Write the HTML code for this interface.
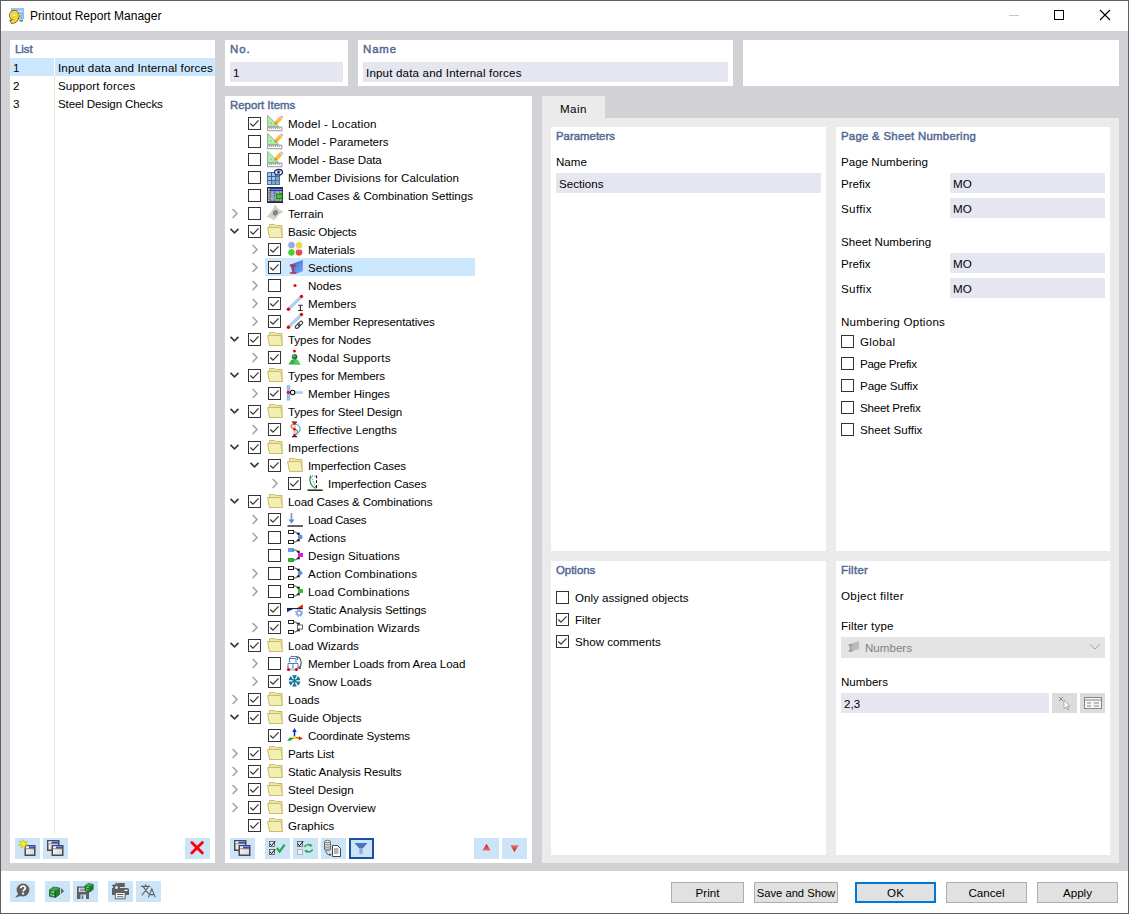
<!DOCTYPE html><html><head><meta charset="utf-8"><title>Printout Report Manager</title><style>
*{margin:0;padding:0;box-sizing:border-box}
html,body{width:1129px;height:914px;overflow:hidden;background:#fff}
body{position:relative;font-family:"Liberation Sans",sans-serif;font-size:11.6px;color:#000}
.a{position:absolute;display:block}
svg{overflow:visible}
.pn{position:absolute;background:#fff}
.h{position:absolute;font-weight:normal;font-size:11.4px;color:#516894;-webkit-text-stroke:.45px #516894;white-space:nowrap;line-height:14px}
.t{position:absolute;white-space:nowrap;line-height:18px}
.inp{position:absolute;background:#e6e6f0}
.tb{position:absolute;background:#cce4f7;width:25px;height:21px}
.btn{position:absolute;top:882px;height:21px;background:#e1e1e1;border:1px solid #adadad;text-align:center;line-height:19px}
</style></head><body>
<div class="a" style="left:0;top:0;width:1129px;height:914px;border:1px solid #5f5f5f;background:#fff"></div>
<div class="a" style="left:1px;top:31px;width:1127px;height:840px;background:#d1d1d6"></div>
<svg class="a" style="left:8px;top:6px" width="18" height="18" viewBox="0 0 18 18"><rect x="3" y="2" width="13" height="11.2" fill="#8fbce8"/><path d="M3 3h13" stroke="#a8ccf0"/><path d="M9 5.3h5.5M10.5 8.5h2" stroke="#fff" stroke-width="1"/><path d="M1.5 14.6h3M11.5 14.6h3.5" stroke="#2a9a4a" stroke-width="1.6"/><g fill="none" stroke-linecap="round"><circle cx="6.2" cy="9.3" r="2.9" stroke="#3a3a3a" stroke-width="4.4"/><path d="M9.1 9.8C9 13 7.4 15 4.6 15.7" stroke="#3a3a3a" stroke-width="4.4"/><circle cx="6.2" cy="9.3" r="2.9" stroke="#f8d428" stroke-width="3.3"/><path d="M9.1 9.8C9 13 7.4 15 4.6 15.7" stroke="#f8d428" stroke-width="3.3"/></g><circle cx="6.3" cy="9.3" r="1.2" fill="#fff"/></svg>
<div class="t" style="left:30px;top:7px;font-size:12px;line-height:18px">Printout Report Manager</div>
<div class="a" style="left:1009px;top:15px;width:10px;height:1px;background:#c8c8c8"></div>
<div class="a" style="left:1054px;top:10px;width:10px;height:10px;border:1px solid #000"></div>
<svg class="a" style="left:1099px;top:9px" width="12" height="12"><path d="M1 1l10 10M11 1l-10 10" stroke="#000" stroke-width="1.1"/></svg>
<div class="pn" style="left:10px;top:40px;width:205px;height:823px"></div>
<div class="h" style="left:15px;top:42px">List</div>
<div class="a" style="left:10px;top:58px;width:205px;height:18px;background:#cce8ff"></div>
<div class="a" style="left:54px;top:76px;width:1px;height:758px;background:#e3e3e3"></div>
<div class="a" style="left:54px;top:58px;width:1px;height:18px;background:#fff"></div>
<div class="t" style="left:13px;top:59px;">1</div>
<div class="t" style="left:58px;top:59px;letter-spacing:.14px">Input data and Internal forces</div>
<div class="t" style="left:13px;top:77px;">2</div>
<div class="t" style="left:58px;top:77px;letter-spacing:.14px">Support forces</div>
<div class="t" style="left:13px;top:95px;">3</div>
<div class="t" style="left:58px;top:95px;letter-spacing:-.15px">Steel Design Checks</div>
<div class="tb" style="left:15px;top:838px"></div><div class="tb" style="left:43px;top:838px"></div><div class="tb" style="left:185px;top:838px"></div>
<svg class="a" style="left:15px;top:838px" width="25" height="21"><defs><linearGradient id="wg" x1="0" y1="0" x2="1" y2="1"><stop offset="0" stop-color="#fff"/><stop offset="1" stop-color="#d4d4d4"/></linearGradient></defs><rect x="10.25" y="7.75" width="9.5" height="9.5" fill="url(#wg)" stroke="#4a4a4a" stroke-width="1.5"/><rect x="11.0" y="8.5" width="8" height="2" fill="#f4f4f4"/><rect x="14.0" y="8.5" width="5" height="2" fill="#3848f0"/><path d="M11.0 10.75h8" stroke="#4a4a4a" stroke-width=".6"/><path d="M8.4 1.6l1.1 2.6 2.8-.9-1.7 2.3 2.4 1.6-2.9.3.2 2.9-2-2.1-2 2.1.2-2.9-2.9-.3 2.4-1.6-1.7-2.3 2.8.9z" fill="#f8f010" stroke="#a8a040" stroke-width=".5"/></svg>
<svg class="a" style="left:43px;top:838px" width="25" height="21"><defs><linearGradient id="wg" x1="0" y1="0" x2="1" y2="1"><stop offset="0" stop-color="#fff"/><stop offset="1" stop-color="#d4d4d4"/></linearGradient></defs><rect x="4.75" y="2.75" width="11.0" height="9.5" fill="url(#wg)" stroke="#4a4a4a" stroke-width="1.5"/><rect x="5.5" y="3.5" width="9.5" height="2" fill="#f4f4f4"/><rect x="8.5" y="3.5" width="6.5" height="2" fill="#3848f0"/><path d="M5.5 5.75h9.5" stroke="#4a4a4a" stroke-width=".6"/><rect x="9.25" y="7.75" width="10.5" height="9.5" fill="url(#wg)" stroke="#4a4a4a" stroke-width="1.5"/><rect x="10.0" y="8.5" width="9" height="2" fill="#f4f4f4"/><rect x="13.0" y="8.5" width="6" height="2" fill="#3848f0"/><path d="M10.0 10.75h9" stroke="#4a4a4a" stroke-width=".6"/></svg>
<svg class="a" style="left:189px;top:840px" width="17" height="17"><path d="M2.8 2.5l10.6 10.6M13.4 2.5L2.8 13.1" stroke="#f00" stroke-width="2.8" stroke-linecap="round"/></svg>
<div class="pn" style="left:225px;top:40px;width:123px;height:46px"></div>
<div class="h" style="left:230px;top:42px;letter-spacing:1px">No.</div>
<div class="inp" style="left:230px;top:62px;width:113px;height:20px"></div>
<div class="t" style="left:233px;top:64px;">1</div>
<div class="pn" style="left:358px;top:40px;width:375px;height:46px"></div>
<div class="h" style="left:363px;top:42px;letter-spacing:.9px">Name</div>
<div class="inp" style="left:363px;top:62px;width:365px;height:20px"></div>
<div class="t" style="left:366px;top:64px;letter-spacing:.16px">Input data and Internal forces</div>
<div class="pn" style="left:743px;top:40px;width:376px;height:46px"></div>
<div class="pn" style="left:225px;top:96px;width:307px;height:767px"></div>
<div class="h" style="left:230px;top:98px">Report Items</div>
<div class="a" style="left:265px;top:258px;width:210px;height:18px;background:#cce8ff"></div>
<svg class="a" style="left:248px;top:117px" width="13" height="13"><rect x=".5" y=".5" width="12" height="12" fill="#fff" stroke="#333"/><path d="M2.3 6.5 L5 9.1 L10.6 3.4" fill="none" stroke="#383838" stroke-width="1.2"/></svg>
<svg class="a" style="left:267px;top:115px" width="16" height="16" viewBox="0 0 16 16"><path d="M.6 .4v11h11.2z" fill="#a6f6a0" stroke="#8a9a8a" stroke-width=".8"/><path d="M3.2 6.4v2.6h2.6z" fill="#c0a8d8"/><rect x=".6" y="12.2" width="14.2" height="3.5" fill="#fff" stroke="#a0a0a0" stroke-width="1.1"/><path d="M2.6 12.5v1.5M4.6 12.5v1.5M6.6 12.5v1.5M8.6 12.5v1.5M10.6 12.5v1.5M12.6 12.5v1.5" stroke="#999" stroke-width=".9"/><path d="M10.17 8.95L7.99 6.89 12.73 1.85 14.91 3.91z" fill="#fcc020" stroke="#c89010" stroke-width=".4"/><path d="M7.5 9.6L7.99 6.89 10.17 8.95z" fill="#e06020"/><path d="M12.73 1.85L14.91 3.91 16.49 2.23 14.31 .17z" fill="#e8a8e0"/><path d="M12.9 2.1l2 1.9" stroke="#fff4d0" stroke-width=".7"/></svg>
<div class="t" style="left:288px;top:115px;letter-spacing:0.187px">Model - Location</div>
<svg class="a" style="left:248px;top:135px" width="13" height="13"><rect x=".5" y=".5" width="12" height="12" fill="#fff" stroke="#333"/></svg>
<svg class="a" style="left:267px;top:133px" width="16" height="16" viewBox="0 0 16 16"><path d="M.6 .4v11h11.2z" fill="#a6f6a0" stroke="#8a9a8a" stroke-width=".8"/><path d="M3.2 6.4v2.6h2.6z" fill="#c0a8d8"/><rect x=".6" y="12.2" width="14.2" height="3.5" fill="#fff" stroke="#a0a0a0" stroke-width="1.1"/><path d="M2.6 12.5v1.5M4.6 12.5v1.5M6.6 12.5v1.5M8.6 12.5v1.5M10.6 12.5v1.5M12.6 12.5v1.5" stroke="#999" stroke-width=".9"/><path d="M10.17 8.95L7.99 6.89 12.73 1.85 14.91 3.91z" fill="#fcc020" stroke="#c89010" stroke-width=".4"/><path d="M7.5 9.6L7.99 6.89 10.17 8.95z" fill="#e06020"/><path d="M12.73 1.85L14.91 3.91 16.49 2.23 14.31 .17z" fill="#e8a8e0"/><path d="M12.9 2.1l2 1.9" stroke="#fff4d0" stroke-width=".7"/></svg>
<div class="t" style="left:288px;top:133px;letter-spacing:-0.076px">Model - Parameters</div>
<svg class="a" style="left:248px;top:153px" width="13" height="13"><rect x=".5" y=".5" width="12" height="12" fill="#fff" stroke="#333"/></svg>
<svg class="a" style="left:267px;top:151px" width="16" height="16" viewBox="0 0 16 16"><path d="M.6 .4v11h11.2z" fill="#a6f6a0" stroke="#8a9a8a" stroke-width=".8"/><path d="M3.2 6.4v2.6h2.6z" fill="#c0a8d8"/><rect x=".6" y="12.2" width="14.2" height="3.5" fill="#fff" stroke="#a0a0a0" stroke-width="1.1"/><path d="M2.6 12.5v1.5M4.6 12.5v1.5M6.6 12.5v1.5M8.6 12.5v1.5M10.6 12.5v1.5M12.6 12.5v1.5" stroke="#999" stroke-width=".9"/><path d="M10.17 8.95L7.99 6.89 12.73 1.85 14.91 3.91z" fill="#fcc020" stroke="#c89010" stroke-width=".4"/><path d="M7.5 9.6L7.99 6.89 10.17 8.95z" fill="#e06020"/><path d="M12.73 1.85L14.91 3.91 16.49 2.23 14.31 .17z" fill="#e8a8e0"/><path d="M12.9 2.1l2 1.9" stroke="#fff4d0" stroke-width=".7"/></svg>
<div class="t" style="left:288px;top:151px;letter-spacing:-0.144px">Model - Base Data</div>
<svg class="a" style="left:248px;top:171px" width="13" height="13"><rect x=".5" y=".5" width="12" height="12" fill="#fff" stroke="#333"/></svg>
<svg class="a" style="left:267px;top:169px" width="16" height="16" viewBox="0 0 16 16"><rect x=".5" y="3.5" width="12" height="12" fill="#9cc8ee" stroke="#50709a"/><path d="M4.5 3.5v12M8.5 3.5v12M.5 7.5h12M.5 11.5h12" stroke="#405e88" stroke-width="1"/><path d="M8.5 7.5h4v8h-4zM4.5 11.5h4v4h-4z" fill="#6a8ab8" opacity=".6"/><ellipse cx="11.5" cy="3.2" rx="4" ry="2.7" fill="#fff" stroke="#262466" stroke-width="1.3"/><circle cx="11.5" cy="3.2" r="1.7" fill="#4a7ad8"/><circle cx="11.5" cy="3.2" r=".8" fill="#000"/></svg>
<div class="t" style="left:288px;top:169px;letter-spacing:0.048px">Member Divisions for Calculation</div>
<svg class="a" style="left:248px;top:189px" width="13" height="13"><rect x=".5" y=".5" width="12" height="12" fill="#fff" stroke="#333"/></svg>
<svg class="a" style="left:267px;top:187px" width="16" height="16" viewBox="0 0 16 16"><rect x=".5" y=".5" width="15" height="15" fill="#777" stroke="#2a2a2a"/><rect x="3" y="1" width="12.5" height="2.8" fill="#1a2aa8"/><path d="M3.5 2.4h11.5" stroke="#6a9af0" stroke-width="1"/><path d="M1.8 2v12.5" stroke="#fff" stroke-width="1.1" stroke-dasharray="1 1.2"/><path d="M8.5 5h7M8.5 13h7M8.5 7v5M11 5.5v1.5" stroke="#f4f4f4" stroke-width="1" stroke-dasharray="1.2 1"/><path d="M4.2 4v6.8H2.4l3 3.6 3-3.6H6.6V4z" fill="#88b0e0"/><rect x="9.2" y="7.2" width="6" height="4.2" fill="#30d030" stroke="#0a7a0a" stroke-width=".8"/><path d="M1 15h14" stroke="#222" stroke-width="1.2"/></svg>
<div class="t" style="left:288px;top:187px;letter-spacing:-0.041px">Load Cases &amp; Combination Settings</div>
<svg class="a" style="left:231px;top:208px" width="8" height="11"><path d="M1.6 1l4.4 4.5-4.4 4.5" fill="none" stroke="#a4a4a4" stroke-width="1.6"/></svg>
<svg class="a" style="left:248px;top:207px" width="13" height="13"><rect x=".5" y=".5" width="12" height="12" fill="#fff" stroke="#333"/></svg>
<svg class="a" style="left:267px;top:205px" width="16" height="16" viewBox="0 0 16 16"><path d="M8.4 0C9.2 3 11.5 5.2 15.9 6.6 12.8 8.6 9.8 11 6.8 15 5.2 13.2 2.8 12.2 0 11.7 3.2 9 5.8 5.5 8.4 0z" fill="#d6d6c0" stroke="#c2c2aa" stroke-width=".6"/><path d="M3 10.5c3-1 7-2 11-3.5M5 6c2 2 3 5 4 7.5" fill="none" stroke="#bcbca2" stroke-width=".6"/><ellipse cx="8.4" cy="7.8" rx="2.4" ry="2.9" transform="rotate(30 8.4 7.8)" fill="#80809a"/></svg>
<div class="t" style="left:288px;top:205px;">Terrain</div>
<svg class="a" style="left:229px;top:227px" width="11" height="8"><path d="M1.5 1.8l4 4 4-4" fill="none" stroke="#3c3c3c" stroke-width="1.75"/></svg>
<svg class="a" style="left:248px;top:225px" width="13" height="13"><rect x=".5" y=".5" width="12" height="12" fill="#fff" stroke="#333"/><path d="M2.3 6.5 L5 9.1 L10.6 3.4" fill="none" stroke="#383838" stroke-width="1.2"/></svg>
<svg class="a" style="left:267px;top:223px" width="16" height="16" viewBox="0 0 16 16"><path d="M2.5 1.5h5.2l1 1h6.3v12h-12.5z" fill="#f2e8a6" stroke="#c9bd6c"/><path d="M.6 4.5h13.4l1.5 10h-13z" fill="#f5eeb2" stroke="#c9bd6c"/></svg>
<div class="t" style="left:288px;top:223px;letter-spacing:-0.200px">Basic Objects</div>
<svg class="a" style="left:251px;top:244px" width="8" height="11"><path d="M1.6 1l4.4 4.5-4.4 4.5" fill="none" stroke="#a4a4a4" stroke-width="1.6"/></svg>
<svg class="a" style="left:268px;top:243px" width="13" height="13"><rect x=".5" y=".5" width="12" height="12" fill="#fff" stroke="#333"/><path d="M2.3 6.5 L5 9.1 L10.6 3.4" fill="none" stroke="#383838" stroke-width="1.2"/></svg>
<svg class="a" style="left:287px;top:241px" width="16" height="16" viewBox="0 0 16 16"><defs><clipPath id="mclip"><rect x="0" y="7.8" width="16" height="9"/></clipPath></defs><g stroke="#fff" stroke-width="1"><circle cx="12" cy="4.4" r="3.9" fill="#e6dc50"/><circle cx="4.5" cy="4.2" r="3.9" fill="#98a6e4"/><circle cx="4.5" cy="11.4" r="3.9" fill="#50d030"/><circle cx="12" cy="11.4" r="3.9" fill="#e84848"/><circle cx="12" cy="4.4" r="3.9" fill="#e6dc50" clip-path="url(#mclip)"/></g></svg>
<div class="t" style="left:308px;top:241px;">Materials</div>
<svg class="a" style="left:251px;top:262px" width="8" height="11"><path d="M1.6 1l4.4 4.5-4.4 4.5" fill="none" stroke="#a4a4a4" stroke-width="1.6"/></svg>
<svg class="a" style="left:268px;top:261px" width="13" height="13"><rect x=".5" y=".5" width="12" height="12" fill="#fff" stroke="#333"/><path d="M2.3 6.5 L5 9.1 L10.6 3.4" fill="none" stroke="#383838" stroke-width="1.2"/></svg>
<svg class="a" style="left:287px;top:259px" width="16" height="16" viewBox="0 0 16 16"><defs><linearGradient id="sg" x1="0" y1="0" x2="1" y2="1"><stop offset="0" stop-color="#2a60d0"/><stop offset="1" stop-color="#70a8f0"/></linearGradient></defs><path d="M3 5.8L15.8 1v11.2L9 14.8H6z" fill="url(#sg)"/><path d="M10 5v9M13 3.5v9.5" stroke="#9ac4f4" stroke-width=".5" opacity=".6"/><path d="M2.8 6.4h6.6M6.1 6.4v7.6M2.8 14h6.6" stroke="#c02c48" stroke-width="1.6"/></svg>
<div class="t" style="left:308px;top:259px;">Sections</div>
<svg class="a" style="left:251px;top:280px" width="8" height="11"><path d="M1.6 1l4.4 4.5-4.4 4.5" fill="none" stroke="#a4a4a4" stroke-width="1.6"/></svg>
<svg class="a" style="left:268px;top:279px" width="13" height="13"><rect x=".5" y=".5" width="12" height="12" fill="#fff" stroke="#333"/></svg>
<svg class="a" style="left:287px;top:277px" width="16" height="16" viewBox="0 0 16 16"><circle cx="8" cy="8.5" r="1.6" fill="#e01010"/></svg>
<div class="t" style="left:308px;top:277px;">Nodes</div>
<svg class="a" style="left:251px;top:298px" width="8" height="11"><path d="M1.6 1l4.4 4.5-4.4 4.5" fill="none" stroke="#a4a4a4" stroke-width="1.6"/></svg>
<svg class="a" style="left:268px;top:297px" width="13" height="13"><rect x=".5" y=".5" width="12" height="12" fill="#fff" stroke="#333"/><path d="M2.3 6.5 L5 9.1 L10.6 3.4" fill="none" stroke="#383838" stroke-width="1.2"/></svg>
<svg class="a" style="left:287px;top:295px" width="16" height="16" viewBox="0 0 16 16"><path d="M1.4 14.3L14.5 1.4" stroke="#8fb2e2" stroke-width="2.8"/><path d="M1.4 14.3L14.5 1.4" stroke="#c4e0f8" stroke-width="1.2"/><circle cx="1.4" cy="14.3" r="1.7" fill="#e00"/><circle cx="14.5" cy="1.4" r="1.7" fill="#e00"/><path d="M11 10.2h4.8M13.4 10.2v5.3M11 15.5h4.8" stroke="#333" stroke-width="1.1"/></svg>
<div class="t" style="left:308px;top:295px;">Members</div>
<svg class="a" style="left:251px;top:316px" width="8" height="11"><path d="M1.6 1l4.4 4.5-4.4 4.5" fill="none" stroke="#a4a4a4" stroke-width="1.6"/></svg>
<svg class="a" style="left:268px;top:315px" width="13" height="13"><rect x=".5" y=".5" width="12" height="12" fill="#fff" stroke="#333"/><path d="M2.3 6.5 L5 9.1 L10.6 3.4" fill="none" stroke="#383838" stroke-width="1.2"/></svg>
<svg class="a" style="left:287px;top:313px" width="16" height="16" viewBox="0 0 16 16"><path d="M1.4 14.3L14.5 1.4" stroke="#8fb2e2" stroke-width="2.8"/><path d="M1.4 14.3L14.5 1.4" stroke="#c4e0f8" stroke-width="1.2"/><circle cx="1.4" cy="14.3" r="1.7" fill="#e00"/><circle cx="14.5" cy="1.4" r="1.7" fill="#e00"/><g fill="none" stroke="#3a3a3a" stroke-width="1.1"><rect x="8" y="11.6" width="5.4" height="3" rx="1.5" transform="rotate(-40 10.7 13.1)"/><rect x="10.6" y="9" width="5.4" height="3" rx="1.5" transform="rotate(-40 13.3 10.5)"/></g></svg>
<div class="t" style="left:308px;top:313px;letter-spacing:-0.124px">Member Representatives</div>
<svg class="a" style="left:229px;top:335px" width="11" height="8"><path d="M1.5 1.8l4 4 4-4" fill="none" stroke="#3c3c3c" stroke-width="1.75"/></svg>
<svg class="a" style="left:248px;top:333px" width="13" height="13"><rect x=".5" y=".5" width="12" height="12" fill="#fff" stroke="#333"/><path d="M2.3 6.5 L5 9.1 L10.6 3.4" fill="none" stroke="#383838" stroke-width="1.2"/></svg>
<svg class="a" style="left:267px;top:331px" width="16" height="16" viewBox="0 0 16 16"><path d="M2.5 1.5h5.2l1 1h6.3v12h-12.5z" fill="#f2e8a6" stroke="#c9bd6c"/><path d="M.6 4.5h13.4l1.5 10h-13z" fill="#f5eeb2" stroke="#c9bd6c"/></svg>
<div class="t" style="left:288px;top:331px;letter-spacing:-0.093px">Types for Nodes</div>
<svg class="a" style="left:251px;top:352px" width="8" height="11"><path d="M1.6 1l4.4 4.5-4.4 4.5" fill="none" stroke="#a4a4a4" stroke-width="1.6"/></svg>
<svg class="a" style="left:268px;top:351px" width="13" height="13"><rect x=".5" y=".5" width="12" height="12" fill="#fff" stroke="#333"/><path d="M2.3 6.5 L5 9.1 L10.6 3.4" fill="none" stroke="#383838" stroke-width="1.2"/></svg>
<svg class="a" style="left:287px;top:349px" width="16" height="16" viewBox="0 0 16 16"><defs><radialGradient id="nsg" cx=".35" cy=".35" r=".7"><stop offset="0" stop-color="#60c070"/><stop offset="1" stop-color="#0a4a1a"/></radialGradient></defs><path d="M4.5 10.8h6l3 4.6H1.3z" fill="#38b048"/><path d="M7.5 10.8h3l3 4.6h-6z" fill="#50cc60"/><circle cx="7.5" cy="7.7" r="2.8" fill="url(#nsg)"/><circle cx="7.4" cy="2.2" r="1.4" fill="#e00"/></svg>
<div class="t" style="left:308px;top:349px;letter-spacing:0.200px">Nodal Supports</div>
<svg class="a" style="left:229px;top:371px" width="11" height="8"><path d="M1.5 1.8l4 4 4-4" fill="none" stroke="#3c3c3c" stroke-width="1.75"/></svg>
<svg class="a" style="left:248px;top:369px" width="13" height="13"><rect x=".5" y=".5" width="12" height="12" fill="#fff" stroke="#333"/><path d="M2.3 6.5 L5 9.1 L10.6 3.4" fill="none" stroke="#383838" stroke-width="1.2"/></svg>
<svg class="a" style="left:267px;top:367px" width="16" height="16" viewBox="0 0 16 16"><path d="M2.5 1.5h5.2l1 1h6.3v12h-12.5z" fill="#f2e8a6" stroke="#c9bd6c"/><path d="M.6 4.5h13.4l1.5 10h-13z" fill="#f5eeb2" stroke="#c9bd6c"/></svg>
<div class="t" style="left:288px;top:367px;letter-spacing:-0.138px">Types for Members</div>
<svg class="a" style="left:251px;top:388px" width="8" height="11"><path d="M1.6 1l4.4 4.5-4.4 4.5" fill="none" stroke="#a4a4a4" stroke-width="1.6"/></svg>
<svg class="a" style="left:268px;top:387px" width="13" height="13"><rect x=".5" y=".5" width="12" height="12" fill="#fff" stroke="#333"/><path d="M2.3 6.5 L5 9.1 L10.6 3.4" fill="none" stroke="#383838" stroke-width="1.2"/></svg>
<svg class="a" style="left:287px;top:385px" width="16" height="16" viewBox="0 0 16 16"><path d="M1.5 .2v15.3" stroke="#a0c4ee" stroke-width="3"/><path d="M.2 .2v15.3M2.8 .2v15.3" stroke="#7aa0d8" stroke-width=".5"/><path d="M7.5 7.5h8.3" stroke="#a8ccf2" stroke-width="2.6"/><circle cx="1.2" cy="7.5" r="1.4" fill="#e00"/><circle cx="5.6" cy="7.5" r="2.2" fill="#fff" stroke="#111" stroke-width="1.1"/></svg>
<div class="t" style="left:308px;top:385px;">Member Hinges</div>
<svg class="a" style="left:229px;top:407px" width="11" height="8"><path d="M1.5 1.8l4 4 4-4" fill="none" stroke="#3c3c3c" stroke-width="1.75"/></svg>
<svg class="a" style="left:248px;top:405px" width="13" height="13"><rect x=".5" y=".5" width="12" height="12" fill="#fff" stroke="#333"/><path d="M2.3 6.5 L5 9.1 L10.6 3.4" fill="none" stroke="#383838" stroke-width="1.2"/></svg>
<svg class="a" style="left:267px;top:403px" width="16" height="16" viewBox="0 0 16 16"><path d="M2.5 1.5h5.2l1 1h6.3v12h-12.5z" fill="#f2e8a6" stroke="#c9bd6c"/><path d="M.6 4.5h13.4l1.5 10h-13z" fill="#f5eeb2" stroke="#c9bd6c"/></svg>
<div class="t" style="left:288px;top:403px;letter-spacing:-0.114px">Types for Steel Design</div>
<svg class="a" style="left:251px;top:424px" width="8" height="11"><path d="M1.6 1l4.4 4.5-4.4 4.5" fill="none" stroke="#a4a4a4" stroke-width="1.6"/></svg>
<svg class="a" style="left:268px;top:423px" width="13" height="13"><rect x=".5" y=".5" width="12" height="12" fill="#fff" stroke="#333"/><path d="M2.3 6.5 L5 9.1 L10.6 3.4" fill="none" stroke="#383838" stroke-width="1.2"/></svg>
<svg class="a" style="left:287px;top:421px" width="16" height="16" viewBox="0 0 16 16"><path d="M7.5 1.5v14" stroke="#b0d4f2" stroke-width="2.4"/><path d="M5 1.2h5M5 15.6h5" stroke="#222" stroke-width="1.2"/><path d="M7.5 2.5C3 4 2.8 6.5 7.5 8.2S11 12.5 7.5 14.2" fill="none" stroke="#f07020" stroke-width="1.3"/><path d="M7.5 2.5C12.5 4 14.8 7.5 12 11S8.5 14 7.5 14.2" fill="none" stroke="#38c0d0" stroke-width="1.1"/><circle cx="7.5" cy="2.4" r="1.3" fill="#e00"/><circle cx="7.5" cy="8.2" r="1.2" fill="#e00"/><circle cx="7.5" cy="14.3" r="1.3" fill="#e00"/></svg>
<div class="t" style="left:308px;top:421px;">Effective Lengths</div>
<svg class="a" style="left:229px;top:443px" width="11" height="8"><path d="M1.5 1.8l4 4 4-4" fill="none" stroke="#3c3c3c" stroke-width="1.75"/></svg>
<svg class="a" style="left:248px;top:441px" width="13" height="13"><rect x=".5" y=".5" width="12" height="12" fill="#fff" stroke="#333"/><path d="M2.3 6.5 L5 9.1 L10.6 3.4" fill="none" stroke="#383838" stroke-width="1.2"/></svg>
<svg class="a" style="left:267px;top:439px" width="16" height="16" viewBox="0 0 16 16"><path d="M2.5 1.5h5.2l1 1h6.3v12h-12.5z" fill="#f2e8a6" stroke="#c9bd6c"/><path d="M.6 4.5h13.4l1.5 10h-13z" fill="#f5eeb2" stroke="#c9bd6c"/></svg>
<div class="t" style="left:288px;top:439px;letter-spacing:0.125px">Imperfections</div>
<svg class="a" style="left:249px;top:461px" width="11" height="8"><path d="M1.5 1.8l4 4 4-4" fill="none" stroke="#3c3c3c" stroke-width="1.75"/></svg>
<svg class="a" style="left:268px;top:459px" width="13" height="13"><rect x=".5" y=".5" width="12" height="12" fill="#fff" stroke="#333"/><path d="M2.3 6.5 L5 9.1 L10.6 3.4" fill="none" stroke="#383838" stroke-width="1.2"/></svg>
<svg class="a" style="left:287px;top:457px" width="16" height="16" viewBox="0 0 16 16"><path d="M2.5 1.5h5.2l1 1h6.3v12h-12.5z" fill="#f2e8a6" stroke="#c9bd6c"/><path d="M.6 4.5h13.4l1.5 10h-13z" fill="#f5eeb2" stroke="#c9bd6c"/></svg>
<div class="t" style="left:308px;top:457px;letter-spacing:-0.106px">Imperfection Cases</div>
<svg class="a" style="left:271px;top:478px" width="8" height="11"><path d="M1.6 1l4.4 4.5-4.4 4.5" fill="none" stroke="#a4a4a4" stroke-width="1.6"/></svg>
<svg class="a" style="left:288px;top:477px" width="13" height="13"><rect x=".5" y=".5" width="12" height="12" fill="#fff" stroke="#333"/><path d="M2.3 6.5 L5 9.1 L10.6 3.4" fill="none" stroke="#383838" stroke-width="1.2"/></svg>
<svg class="a" style="left:307px;top:475px" width="16" height="16" viewBox="0 0 16 16"><path d="M3.5 .5C2 6 3.5 11 9 13.5" fill="none" stroke="#20a050" stroke-width="1.3"/><path d="M9.5 .5v13" stroke="#111" stroke-width="1.1" stroke-dasharray="2.8 2"/><path d="M5 1h4M4.2 2L9 12.5" stroke="#333" stroke-width=".8" stroke-dasharray="1 1.5"/><path d="M.5 15.2h15.2" stroke="#222" stroke-width="1.5"/></svg>
<div class="t" style="left:328px;top:475px;letter-spacing:-0.082px">Imperfection Cases</div>
<svg class="a" style="left:229px;top:497px" width="11" height="8"><path d="M1.5 1.8l4 4 4-4" fill="none" stroke="#3c3c3c" stroke-width="1.75"/></svg>
<svg class="a" style="left:248px;top:495px" width="13" height="13"><rect x=".5" y=".5" width="12" height="12" fill="#fff" stroke="#333"/><path d="M2.3 6.5 L5 9.1 L10.6 3.4" fill="none" stroke="#383838" stroke-width="1.2"/></svg>
<svg class="a" style="left:267px;top:493px" width="16" height="16" viewBox="0 0 16 16"><path d="M2.5 1.5h5.2l1 1h6.3v12h-12.5z" fill="#f2e8a6" stroke="#c9bd6c"/><path d="M.6 4.5h13.4l1.5 10h-13z" fill="#f5eeb2" stroke="#c9bd6c"/></svg>
<div class="t" style="left:288px;top:493px;letter-spacing:-0.104px">Load Cases &amp; Combinations</div>
<svg class="a" style="left:251px;top:514px" width="8" height="11"><path d="M1.6 1l4.4 4.5-4.4 4.5" fill="none" stroke="#a4a4a4" stroke-width="1.6"/></svg>
<svg class="a" style="left:268px;top:513px" width="13" height="13"><rect x=".5" y=".5" width="12" height="12" fill="#fff" stroke="#333"/><path d="M2.3 6.5 L5 9.1 L10.6 3.4" fill="none" stroke="#383838" stroke-width="1.2"/></svg>
<svg class="a" style="left:287px;top:511px" width="16" height="16" viewBox="0 0 16 16"><path d="M4.5 2v8" stroke="#7aa2d8" stroke-width="1.8"/><path d="M1.5 8.5l3 4 3-4z" fill="#5a86cc"/><path d="M.5 15h15.5" stroke="#222" stroke-width="1.4"/></svg>
<div class="t" style="left:308px;top:511px;letter-spacing:-0.378px">Load Cases</div>
<svg class="a" style="left:251px;top:532px" width="8" height="11"><path d="M1.6 1l4.4 4.5-4.4 4.5" fill="none" stroke="#a4a4a4" stroke-width="1.6"/></svg>
<svg class="a" style="left:268px;top:531px" width="13" height="13"><rect x=".5" y=".5" width="12" height="12" fill="#fff" stroke="#333"/></svg>
<svg class="a" style="left:287px;top:529px" width="16" height="16" viewBox="0 0 16 16"><rect x="1.5" y="1.5" width="5" height="3" fill="none" stroke="#222"/><rect x="1.5" y="11.5" width="5" height="3" fill="none" stroke="#222"/><path d="M6.5 3c2.5 0 3.5.5 4.5 1.5M6.5 13c2.5 0 3.5-.5 4.5-1.5" fill="none" stroke="#333" stroke-width=".9"/><path d="M9.2 4.2l3.6-.6-.2 3.8zM9.2 11.8l3.6.6-.2-3.8z" fill="#222"/><circle cx="13.2" cy="8" r="2.4" fill="#5a90e8"/></svg>
<div class="t" style="left:308px;top:529px;">Actions</div>
<svg class="a" style="left:268px;top:549px" width="13" height="13"><rect x=".5" y=".5" width="12" height="12" fill="#fff" stroke="#333"/></svg>
<svg class="a" style="left:287px;top:547px" width="16" height="16" viewBox="0 0 16 16"><rect x="1.5" y="1.5" width="5" height="3" fill="#6a9ae8" stroke="#6a9ae8"/><rect x="1.5" y="11.5" width="5" height="3" fill="#30b030" stroke="#30b030"/><path d="M6.5 3c2.5 0 3.5.5 4.5 1.5M6.5 13c2.5 0 3.5-.5 4.5-1.5" fill="none" stroke="#333" stroke-width=".9"/><path d="M9.2 4.2l3.6-.6-.2 3.8zM9.2 11.8l3.6.6-.2-3.8z" fill="#222"/><rect x="11" y="6" width="5" height="4" fill="#f010f0"/></svg>
<div class="t" style="left:308px;top:547px;letter-spacing:0.100px">Design Situations</div>
<svg class="a" style="left:251px;top:568px" width="8" height="11"><path d="M1.6 1l4.4 4.5-4.4 4.5" fill="none" stroke="#a4a4a4" stroke-width="1.6"/></svg>
<svg class="a" style="left:268px;top:567px" width="13" height="13"><rect x=".5" y=".5" width="12" height="12" fill="#fff" stroke="#333"/></svg>
<svg class="a" style="left:287px;top:565px" width="16" height="16" viewBox="0 0 16 16"><rect x="1.5" y="1.5" width="5" height="3" fill="none" stroke="#222"/><rect x="1.5" y="11.5" width="5" height="3" fill="none" stroke="#222"/><path d="M6.5 3c2.5 0 3.5.5 4.5 1.5M6.5 13c2.5 0 3.5-.5 4.5-1.5" fill="none" stroke="#333" stroke-width=".9"/><path d="M9.2 4.2l3.6-.6-.2 3.8zM9.2 11.8l3.6.6-.2-3.8z" fill="#222"/><path d="M13.2 5.2l2.8 2.8-2.8 2.8-2.8-2.8z" fill="#5a90e8"/></svg>
<div class="t" style="left:308px;top:565px;letter-spacing:0.144px">Action Combinations</div>
<svg class="a" style="left:251px;top:586px" width="8" height="11"><path d="M1.6 1l4.4 4.5-4.4 4.5" fill="none" stroke="#a4a4a4" stroke-width="1.6"/></svg>
<svg class="a" style="left:268px;top:585px" width="13" height="13"><rect x=".5" y=".5" width="12" height="12" fill="#fff" stroke="#333"/></svg>
<svg class="a" style="left:287px;top:583px" width="16" height="16" viewBox="0 0 16 16"><rect x="1.5" y="1.5" width="5" height="3" fill="none" stroke="#222"/><rect x="1.5" y="11.5" width="5" height="3" fill="none" stroke="#222"/><path d="M6.5 3c2.5 0 3.5.5 4.5 1.5M6.5 13c2.5 0 3.5-.5 4.5-1.5" fill="none" stroke="#333" stroke-width=".9"/><path d="M9.2 4.2l3.6-.6-.2 3.8zM9.2 11.8l3.6.6-.2-3.8z" fill="#222"/><rect x="11" y="6" width="5" height="4" fill="#30c030"/></svg>
<div class="t" style="left:308px;top:583px;letter-spacing:0.106px">Load Combinations</div>
<svg class="a" style="left:268px;top:603px" width="13" height="13"><rect x=".5" y=".5" width="12" height="12" fill="#fff" stroke="#333"/><path d="M2.3 6.5 L5 9.1 L10.6 3.4" fill="none" stroke="#383838" stroke-width="1.2"/></svg>
<svg class="a" style="left:287px;top:601px" width="16" height="16" viewBox="0 0 16 16"><path d="M0 7.4v3.8l7-3.8z" fill="#1a2aa0"/><path d="M9.5 7.4l6.3-4.1v4.1z" fill="#d82800"/><path d="M0 7.6h15.8" stroke="#111" stroke-width="1"/><circle cx="12.1" cy="11.9" r="3.2" fill="none" stroke="#80a0f8" stroke-width="1.6" stroke-dasharray="1.3 1.2"/><circle cx="12.1" cy="11.9" r="2.2" fill="none" stroke="#80a0f8" stroke-width="1.4"/></svg>
<div class="t" style="left:308px;top:601px;letter-spacing:-0.065px">Static Analysis Settings</div>
<svg class="a" style="left:251px;top:622px" width="8" height="11"><path d="M1.6 1l4.4 4.5-4.4 4.5" fill="none" stroke="#a4a4a4" stroke-width="1.6"/></svg>
<svg class="a" style="left:268px;top:621px" width="13" height="13"><rect x=".5" y=".5" width="12" height="12" fill="#fff" stroke="#333"/><path d="M2.3 6.5 L5 9.1 L10.6 3.4" fill="none" stroke="#383838" stroke-width="1.2"/></svg>
<svg class="a" style="left:287px;top:619px" width="16" height="16" viewBox="0 0 16 16"><rect x="1.5" y="1.5" width="5" height="3" fill="none" stroke="#222"/><rect x="1.5" y="11.5" width="5" height="3" fill="none" stroke="#222"/><path d="M6.5 3c2.5 0 3.5.5 4.5 1.5M6.5 13c2.5 0 3.5-.5 4.5-1.5" fill="none" stroke="#333" stroke-width=".9"/><path d="M9.2 4.2l3.6-.6-.2 3.8zM9.2 11.8l3.6.6-.2-3.8z" fill="#222"/><rect x="10.5" y="6" width="5" height="4" fill="#fff" stroke="#666"/></svg>
<div class="t" style="left:308px;top:619px;letter-spacing:0.089px">Combination Wizards</div>
<svg class="a" style="left:229px;top:641px" width="11" height="8"><path d="M1.5 1.8l4 4 4-4" fill="none" stroke="#3c3c3c" stroke-width="1.75"/></svg>
<svg class="a" style="left:248px;top:639px" width="13" height="13"><rect x=".5" y=".5" width="12" height="12" fill="#fff" stroke="#333"/><path d="M2.3 6.5 L5 9.1 L10.6 3.4" fill="none" stroke="#383838" stroke-width="1.2"/></svg>
<svg class="a" style="left:267px;top:637px" width="16" height="16" viewBox="0 0 16 16"><path d="M2.5 1.5h5.2l1 1h6.3v12h-12.5z" fill="#f2e8a6" stroke="#c9bd6c"/><path d="M.6 4.5h13.4l1.5 10h-13z" fill="#f5eeb2" stroke="#c9bd6c"/></svg>
<div class="t" style="left:288px;top:637px;">Load Wizards</div>
<svg class="a" style="left:251px;top:658px" width="8" height="11"><path d="M1.6 1l4.4 4.5-4.4 4.5" fill="none" stroke="#a4a4a4" stroke-width="1.6"/></svg>
<svg class="a" style="left:268px;top:657px" width="13" height="13"><rect x=".5" y=".5" width="12" height="12" fill="#fff" stroke="#333"/></svg>
<svg class="a" style="left:287px;top:655px" width="16" height="16" viewBox="0 0 16 16"><g fill="none" stroke="#4a6aae" stroke-width=".9"><path d="M2.5 3.5L4 1.5h6.5v3.5M2.5 3.5h6.5l1.5-2M2.5 3.5v3M9 3.5v3M1 8.5h10M1 8.5v4.5M6 8.5v4.5M11 8.5v4.5"/></g><path d="M1.5 6l1 1.5 1-1.5M8 6l1 1.5 1-1.5M0 11.5l1 1.5 1-1.5M5 11.5l1 1.5 1-1.5M10 11.5l1 1.5 1-1.5" fill="none" stroke="#7a9ad0" stroke-width=".7"/><path d="M1.5 14.5h8" stroke="#90c8f0" stroke-width="2"/><circle cx="1.5" cy="14.5" r="1.6" fill="#e00"/><circle cx="9.5" cy="14.5" r="1.6" fill="#e00"/><path d="M11 2c4 1.5 4 9 1 11" fill="none" stroke="#555" stroke-width="1.1"/><path d="M10.8 13.6l2.6-2.2.4 2.8z" fill="#444"/></svg>
<div class="t" style="left:308px;top:655px;letter-spacing:-0.096px">Member Loads from Area Load</div>
<svg class="a" style="left:251px;top:676px" width="8" height="11"><path d="M1.6 1l4.4 4.5-4.4 4.5" fill="none" stroke="#a4a4a4" stroke-width="1.6"/></svg>
<svg class="a" style="left:268px;top:675px" width="13" height="13"><rect x=".5" y=".5" width="12" height="12" fill="#fff" stroke="#333"/><path d="M2.3 6.5 L5 9.1 L10.6 3.4" fill="none" stroke="#383838" stroke-width="1.2"/></svg>
<svg class="a" style="left:287px;top:673px" width="16" height="16" viewBox="0 0 16 16"><circle cx="7.5" cy="7.9" r="5.9" fill="#1a7896"/><path d="M9.40 7.90L14.00 7.90M8.45 6.25L10.75 2.27M6.55 6.25L4.25 2.27M5.60 7.90L1.00 7.90M6.55 9.55L4.25 13.53M8.45 9.55L10.75 13.53" stroke="#fff" stroke-width="1.3"/><circle cx="7.5" cy="7.9" r="1.2" fill="#1a7896"/></svg>
<div class="t" style="left:308px;top:673px;">Snow Loads</div>
<svg class="a" style="left:231px;top:694px" width="8" height="11"><path d="M1.6 1l4.4 4.5-4.4 4.5" fill="none" stroke="#a4a4a4" stroke-width="1.6"/></svg>
<svg class="a" style="left:248px;top:693px" width="13" height="13"><rect x=".5" y=".5" width="12" height="12" fill="#fff" stroke="#333"/><path d="M2.3 6.5 L5 9.1 L10.6 3.4" fill="none" stroke="#383838" stroke-width="1.2"/></svg>
<svg class="a" style="left:267px;top:691px" width="16" height="16" viewBox="0 0 16 16"><path d="M2.5 1.5h5.2l1 1h6.3v12h-12.5z" fill="#f2e8a6" stroke="#c9bd6c"/><path d="M.6 4.5h13.4l1.5 10h-13z" fill="#f5eeb2" stroke="#c9bd6c"/></svg>
<div class="t" style="left:288px;top:691px;">Loads</div>
<svg class="a" style="left:229px;top:713px" width="11" height="8"><path d="M1.5 1.8l4 4 4-4" fill="none" stroke="#3c3c3c" stroke-width="1.75"/></svg>
<svg class="a" style="left:248px;top:711px" width="13" height="13"><rect x=".5" y=".5" width="12" height="12" fill="#fff" stroke="#333"/><path d="M2.3 6.5 L5 9.1 L10.6 3.4" fill="none" stroke="#383838" stroke-width="1.2"/></svg>
<svg class="a" style="left:267px;top:709px" width="16" height="16" viewBox="0 0 16 16"><path d="M2.5 1.5h5.2l1 1h6.3v12h-12.5z" fill="#f2e8a6" stroke="#c9bd6c"/><path d="M.6 4.5h13.4l1.5 10h-13z" fill="#f5eeb2" stroke="#c9bd6c"/></svg>
<div class="t" style="left:288px;top:709px;">Guide Objects</div>
<svg class="a" style="left:268px;top:729px" width="13" height="13"><rect x=".5" y=".5" width="12" height="12" fill="#fff" stroke="#333"/><path d="M2.3 6.5 L5 9.1 L10.6 3.4" fill="none" stroke="#383838" stroke-width="1.2"/></svg>
<svg class="a" style="left:287px;top:727px" width="16" height="16" viewBox="0 0 16 16"><path d="M7.5 10V4" stroke="#0030d0" stroke-width="1.5"/><path d="M5.3 5L7.5 1l2.2 4z" fill="#0030d0"/><path d="M7.5 10.4l5 .8" stroke="#d83000" stroke-width="1.3"/><path d="M12 9.3l4 2.2-4.2 1.7z" fill="#d83000"/><path d="M7.5 10.6L3.5 12" stroke="#10a040" stroke-width="1.4"/><path d="M.2 13.8L3.2 9.9 4.6 13.4z" fill="#10a040"/><circle cx="7.5" cy="10.4" r="1.7" fill="#f8e000"/></svg>
<div class="t" style="left:308px;top:727px;letter-spacing:-0.135px">Coordinate Systems</div>
<svg class="a" style="left:231px;top:748px" width="8" height="11"><path d="M1.6 1l4.4 4.5-4.4 4.5" fill="none" stroke="#a4a4a4" stroke-width="1.6"/></svg>
<svg class="a" style="left:248px;top:747px" width="13" height="13"><rect x=".5" y=".5" width="12" height="12" fill="#fff" stroke="#333"/><path d="M2.3 6.5 L5 9.1 L10.6 3.4" fill="none" stroke="#383838" stroke-width="1.2"/></svg>
<svg class="a" style="left:267px;top:745px" width="16" height="16" viewBox="0 0 16 16"><path d="M2.5 1.5h5.2l1 1h6.3v12h-12.5z" fill="#f2e8a6" stroke="#c9bd6c"/><path d="M.6 4.5h13.4l1.5 10h-13z" fill="#f5eeb2" stroke="#c9bd6c"/></svg>
<div class="t" style="left:288px;top:745px;letter-spacing:-0.233px">Parts List</div>
<svg class="a" style="left:231px;top:766px" width="8" height="11"><path d="M1.6 1l4.4 4.5-4.4 4.5" fill="none" stroke="#a4a4a4" stroke-width="1.6"/></svg>
<svg class="a" style="left:248px;top:765px" width="13" height="13"><rect x=".5" y=".5" width="12" height="12" fill="#fff" stroke="#333"/><path d="M2.3 6.5 L5 9.1 L10.6 3.4" fill="none" stroke="#383838" stroke-width="1.2"/></svg>
<svg class="a" style="left:267px;top:763px" width="16" height="16" viewBox="0 0 16 16"><path d="M2.5 1.5h5.2l1 1h6.3v12h-12.5z" fill="#f2e8a6" stroke="#c9bd6c"/><path d="M.6 4.5h13.4l1.5 10h-13z" fill="#f5eeb2" stroke="#c9bd6c"/></svg>
<div class="t" style="left:288px;top:763px;letter-spacing:-0.145px">Static Analysis Results</div>
<svg class="a" style="left:231px;top:784px" width="8" height="11"><path d="M1.6 1l4.4 4.5-4.4 4.5" fill="none" stroke="#a4a4a4" stroke-width="1.6"/></svg>
<svg class="a" style="left:248px;top:783px" width="13" height="13"><rect x=".5" y=".5" width="12" height="12" fill="#fff" stroke="#333"/><path d="M2.3 6.5 L5 9.1 L10.6 3.4" fill="none" stroke="#383838" stroke-width="1.2"/></svg>
<svg class="a" style="left:267px;top:781px" width="16" height="16" viewBox="0 0 16 16"><path d="M2.5 1.5h5.2l1 1h6.3v12h-12.5z" fill="#f2e8a6" stroke="#c9bd6c"/><path d="M.6 4.5h13.4l1.5 10h-13z" fill="#f5eeb2" stroke="#c9bd6c"/></svg>
<div class="t" style="left:288px;top:781px;">Steel Design</div>
<svg class="a" style="left:231px;top:802px" width="8" height="11"><path d="M1.6 1l4.4 4.5-4.4 4.5" fill="none" stroke="#a4a4a4" stroke-width="1.6"/></svg>
<svg class="a" style="left:248px;top:801px" width="13" height="13"><rect x=".5" y=".5" width="12" height="12" fill="#fff" stroke="#333"/><path d="M2.3 6.5 L5 9.1 L10.6 3.4" fill="none" stroke="#383838" stroke-width="1.2"/></svg>
<svg class="a" style="left:267px;top:799px" width="16" height="16" viewBox="0 0 16 16"><path d="M2.5 1.5h5.2l1 1h6.3v12h-12.5z" fill="#f2e8a6" stroke="#c9bd6c"/><path d="M.6 4.5h13.4l1.5 10h-13z" fill="#f5eeb2" stroke="#c9bd6c"/></svg>
<div class="t" style="left:288px;top:799px;">Design Overview</div>
<svg class="a" style="left:248px;top:819px" width="13" height="13"><rect x=".5" y=".5" width="12" height="12" fill="#fff" stroke="#333"/><path d="M2.3 6.5 L5 9.1 L10.6 3.4" fill="none" stroke="#383838" stroke-width="1.2"/></svg>
<svg class="a" style="left:267px;top:817px" width="16" height="16" viewBox="0 0 16 16"><path d="M2.5 1.5h5.2l1 1h6.3v12h-12.5z" fill="#f2e8a6" stroke="#c9bd6c"/><path d="M.6 4.5h13.4l1.5 10h-13z" fill="#f5eeb2" stroke="#c9bd6c"/></svg>
<div class="t" style="left:288px;top:817px;">Graphics</div>
<div class="tb" style="left:230px;top:838px"></div>
<div class="tb" style="left:265px;top:838px"></div>
<div class="tb" style="left:293px;top:838px"></div>
<div class="tb" style="left:321px;top:838px"></div>
<div class="tb" style="left:349px;top:838px"></div>
<div class="tb" style="left:474px;top:838px"></div>
<div class="tb" style="left:502px;top:838px"></div>
<div class="a" style="left:349px;top:838px;width:25px;height:21px;border:2px solid #1c4f9c"></div>
<svg class="a" style="left:230px;top:838px" width="25" height="21"><defs><linearGradient id="wg" x1="0" y1="0" x2="1" y2="1"><stop offset="0" stop-color="#fff"/><stop offset="1" stop-color="#d4d4d4"/></linearGradient></defs><rect x="4.75" y="2.75" width="11.0" height="9.5" fill="url(#wg)" stroke="#4a4a4a" stroke-width="1.5"/><rect x="5.5" y="3.5" width="9.5" height="2" fill="#f4f4f4"/><rect x="8.5" y="3.5" width="6.5" height="2" fill="#3848f0"/><path d="M5.5 5.75h9.5" stroke="#4a4a4a" stroke-width=".6"/><rect x="9.25" y="7.75" width="10.5" height="9.5" fill="url(#wg)" stroke="#4a4a4a" stroke-width="1.5"/><rect x="10.0" y="8.5" width="9" height="2" fill="#f4f4f4"/><rect x="13.0" y="8.5" width="6" height="2" fill="#3848f0"/><path d="M10.0 10.75h9" stroke="#4a4a4a" stroke-width=".6"/></svg>
<svg class="a" style="left:265px;top:838px" width="25" height="21"><rect x="4.5" y="3.5" width="5" height="5" fill="#e4e4e4" stroke="#555" stroke-width=".8"/><rect x="4.5" y="11.5" width="5" height="5" fill="#e4e4e4" stroke="#555" stroke-width=".8"/><path d="M4.8 5.8l1.8 1.8 3.6-4.4M4.8 13.8l1.8 1.8 3.6-4.4" fill="none" stroke="#111" stroke-width="1"/><path d="M12 10l2.6 3.6 5-7" fill="none" stroke="#22aa44" stroke-width="2.2"/></svg>
<svg class="a" style="left:293px;top:838px" width="25" height="21"><rect x="4.5" y="3.5" width="5" height="5" fill="#e4e4e4" stroke="#555" stroke-width=".8"/><rect x="4.5" y="11.5" width="5" height="5" fill="#eee" stroke="#aaa" stroke-width=".8"/><path d="M4.8 5.8l1.8 1.8 3.6-4.4" fill="none" stroke="#111" stroke-width="1"/><path d="M11.5 9c.8-2.6 5-3.2 7-1" fill="none" stroke="#30a848" stroke-width="1.6"/><path d="M17.2 5.6l2.6 2.4-3.2.8z" fill="#30a848"/><path d="M19.5 11.5c-.8 2.6-5 3.2-7 1" fill="none" stroke="#30a848" stroke-width="1.6"/><path d="M13.8 14.9l-2.6-2.4 3.2-.8z" fill="#30a848"/></svg>
<svg class="a" style="left:321px;top:838px" width="25" height="21"><g fill="#e8e8e8" stroke="#555" stroke-width=".8"><path d="M3.5 3.5v8c0 1.3 6 1.3 6 0v-8"/><ellipse cx="6.5" cy="3.5" rx="3" ry="1.2"/></g><path d="M3.5 5.8c0 1.3 6 1.3 6 0M3.5 8.2c0 1.3 6 1.3 6 0M3.5 10.3c0 1.3 6 1.3 6 0" fill="none" stroke="#555" stroke-width=".8"/><path d="M5 13c0 2.5 1.5 3.8 4 3.8" fill="none" stroke="#444" stroke-width=".9"/><path d="M8.5 15.3l2 1.5-2 1.5z" fill="#444"/><path d="M11.5 7.5h5l3 3v8h-8z" fill="#fff" stroke="#444" stroke-width="1"/><path d="M13 11h4.5M13 13h4.5M13 15h4.5" stroke="#444" stroke-width=".8"/></svg>
<svg class="a" style="left:349px;top:838px" width="25" height="21"><path d="M5.5 5h13l-4.8 5.5H10.3z" fill="#4a72c0"/><path d="M10.3 10.5h3.4v5.5h-3.4z" fill="#90acde"/></svg>
<svg class="a" style="left:480px;top:842px" width="13" height="12"><defs><linearGradient id="ag" x1="0" y1="0" x2="0" y2="1"><stop offset="0" stop-color="#c81818"/><stop offset="1" stop-color="#e87070"/></linearGradient></defs><path d="M2.3 8.5L6.5 1.8l4.2 6.7z" fill="url(#ag)"/></svg>
<svg class="a" style="left:508px;top:843px" width="13" height="12"><defs><linearGradient id="ag2" x1="0" y1="1" x2="0" y2="0"><stop offset="0" stop-color="#c81818"/><stop offset="1" stop-color="#e87070"/></linearGradient></defs><path d="M2.3 2.2h8.3L6.5 9z" fill="url(#ag2)"/></svg>
<div class="a" style="left:542px;top:96px;width:63px;height:22px;background:#ebebeb"></div>
<div class="t" style="left:560px;top:100px;letter-spacing:.4px">Main</div>
<div class="a" style="left:542px;top:118px;width:577px;height:745px;background:#ebebeb"></div>
<div class="pn" style="left:551px;top:127px;width:275px;height:424px"></div>
<div class="pn" style="left:836px;top:127px;width:274px;height:424px"></div>
<div class="pn" style="left:551px;top:561px;width:275px;height:294px"></div>
<div class="pn" style="left:836px;top:561px;width:274px;height:294px"></div>
<div class="h" style="left:556px;top:129px">Parameters</div>
<div class="t" style="left:556px;top:153px;">Name</div>
<div class="inp" style="left:556px;top:173px;width:265px;height:20px"></div>
<div class="t" style="left:559px;top:175px;">Sections</div>
<div class="h" style="left:841px;top:129px;letter-spacing:.27px">Page &amp; Sheet Numbering</div>
<div class="t" style="left:841px;top:153px;">Page Numbering</div>
<div class="t" style="left:841px;top:175px;">Prefix</div>
<div class="inp" style="left:950px;top:173px;width:155px;height:20px"></div>
<div class="t" style="left:953px;top:175px;">MO</div>
<div class="t" style="left:841px;top:200px;letter-spacing:.35px">Suffix</div>
<div class="inp" style="left:950px;top:198px;width:155px;height:20px"></div>
<div class="t" style="left:953px;top:200px;">MO</div>
<div class="t" style="left:841px;top:255px;">Prefix</div>
<div class="inp" style="left:950px;top:253px;width:155px;height:20px"></div>
<div class="t" style="left:953px;top:255px;">MO</div>
<div class="t" style="left:841px;top:280px;letter-spacing:.35px">Suffix</div>
<div class="inp" style="left:950px;top:278px;width:155px;height:20px"></div>
<div class="t" style="left:953px;top:280px;">MO</div>
<div class="t" style="left:841px;top:233px;">Sheet Numbering</div>
<div class="t" style="left:841px;top:313px;letter-spacing:.25px">Numbering Options</div>
<svg class="a" style="left:841px;top:335px" width="13" height="13"><rect x=".5" y=".5" width="12" height="12" fill="#fff" stroke="#333"/></svg>
<div class="t" style="left:860px;top:333px;letter-spacing:0.3px">Global</div>
<svg class="a" style="left:841px;top:357px" width="13" height="13"><rect x=".5" y=".5" width="12" height="12" fill="#fff" stroke="#333"/></svg>
<div class="t" style="left:860px;top:355px;letter-spacing:-0.3px">Page Prefix</div>
<svg class="a" style="left:841px;top:379px" width="13" height="13"><rect x=".5" y=".5" width="12" height="12" fill="#fff" stroke="#333"/></svg>
<div class="t" style="left:860px;top:377px;letter-spacing:-0.1px">Page Suffix</div>
<svg class="a" style="left:841px;top:401px" width="13" height="13"><rect x=".5" y=".5" width="12" height="12" fill="#fff" stroke="#333"/></svg>
<div class="t" style="left:860px;top:399px;letter-spacing:-0.22px">Sheet Prefix</div>
<svg class="a" style="left:841px;top:423px" width="13" height="13"><rect x=".5" y=".5" width="12" height="12" fill="#fff" stroke="#333"/></svg>
<div class="t" style="left:860px;top:421px;letter-spacing:0px">Sheet Suffix</div>
<div class="h" style="left:556px;top:563px">Options</div>
<svg class="a" style="left:556px;top:591px" width="13" height="13"><rect x=".5" y=".5" width="12" height="12" fill="#fff" stroke="#333"/></svg>
<div class="t" style="left:575px;top:589px;">Only assigned objects</div>
<svg class="a" style="left:556px;top:613px" width="13" height="13"><rect x=".5" y=".5" width="12" height="12" fill="#fff" stroke="#333"/><path d="M2.3 6.5 L5 9.1 L10.6 3.4" fill="none" stroke="#383838" stroke-width="1.2"/></svg>
<div class="t" style="left:575px;top:611px;">Filter</div>
<svg class="a" style="left:556px;top:635px" width="13" height="13"><rect x=".5" y=".5" width="12" height="12" fill="#fff" stroke="#333"/><path d="M2.3 6.5 L5 9.1 L10.6 3.4" fill="none" stroke="#383838" stroke-width="1.2"/></svg>
<div class="t" style="left:575px;top:633px;">Show comments</div>
<div class="h" style="left:841px;top:563px;letter-spacing:.3px">Filter</div>
<div class="t" style="left:841px;top:587px;letter-spacing:.33px">Object filter</div>
<div class="t" style="left:841px;top:617px;letter-spacing:.16px">Filter type</div>
<div class="a" style="left:841px;top:637px;width:264px;height:21px;background:#e4e4e4"></div>
<svg class="a" style="left:847px;top:640px" width="14" height="14"><path d="M3 4l9-3v8l-9 3z" fill="#bbb"/><path d="M1.5 5h4M3.5 5v6M1.5 11h4" stroke="#999" stroke-width="1.4"/></svg>
<div class="t" style="left:865px;top:639px;color:#808080">Numbers</div>
<svg class="a" style="left:1089px;top:643px" width="12" height="8"><path d="M1 1.5l5 4.5 5-4.5" fill="none" stroke="#a0a0a0" stroke-width="1"/></svg>
<div class="t" style="left:841px;top:673px;">Numbers</div>
<div class="inp" style="left:841px;top:693px;width:208px;height:20px"></div>
<div class="t" style="left:844px;top:695px;">2,3</div>
<div class="a" style="left:1052px;top:693px;width:25px;height:20px;background:#dcdcdc"></div>
<div class="a" style="left:1080px;top:693px;width:25px;height:20px;background:#dcdcdc"></div>
<svg class="a" style="left:1057px;top:695px" width="16" height="16"><path d="M2 2l4 4M6 2L2 6" stroke="#888" stroke-width="1"/><path d="M7 5v9l2-2 2 3 1-.6-2-3h3z" fill="#fff" stroke="#999" stroke-width=".8"/></svg>
<svg class="a" style="left:1084px;top:697px" width="18" height="13"><rect x=".5" y=".5" width="17" height="11" fill="#f4f4f4" stroke="#888"/><path d="M1 3h16" stroke="#888"/><path d="M3 6h4M10 6h5M3 9h4M10 9h5" stroke="#888"/></svg>
<div class="tb" style="left:10px;top:881px"></div>
<div class="tb" style="left:45px;top:881px"></div>
<div class="tb" style="left:73px;top:881px"></div>
<div class="tb" style="left:108px;top:881px"></div>
<div class="tb" style="left:136px;top:881px"></div>
<svg class="a" style="left:10px;top:881px" width="25" height="21" viewBox="0 0 25 21"><circle cx="13" cy="9" r="6.4" fill="#5f5f5f"/><path d="M8.5 12.5L5 16.8 11.5 14.8z" fill="#5f5f5f"/><path d="M10.9 7.3c0-3 4.4-3 4.4-.2 0 1.7-2.2 1.6-2.2 3.4" fill="none" stroke="#fff" stroke-width="1.7"/><circle cx="13.1" cy="12.6" r="1.05" fill="#fff"/></svg>
<svg class="a" style="left:45px;top:881px" width="25" height="21" viewBox="0 0 25 21"><g transform="translate(4.5 5.5) scale(.92)"><path d="M0 3.5l4.5-3 6.5 1.2v7l-4.5 3.2-6.5-1.3z" fill="#1f7f32" stroke="#0f4a1a" stroke-width=".7"/><path d="M0 3.5l4.5-3 6.5 1.2-4.5 3z" fill="#38a848"/><path d="M6.5 4.7v7.2" stroke="#0f4a1a" stroke-width=".6"/><path d="M2 6.3c1-.8 2.6-.6 3 .3M1.2 9.5l1.5-1.2M3.5 10.4l1.3-1.4" stroke="#a8f0a8" stroke-width="1.3" fill="none"/></g><path d="M16 7l3.2 3-3.2 3z" fill="#666"/></svg>
<svg class="a" style="left:73px;top:881px" width="25" height="21" viewBox="0 0 25 21"><path d="M4 5.5h10.5l1.5 1.5v11H4z" fill="#5f5f5f"/><rect x="5.8" y="6.8" width="7.5" height="4.2" fill="#e4eef8"/><path d="M6.8 8.2h5.2M6.8 9.8h5.2" stroke="#5f5f5f" stroke-width=".8"/><rect x="7.5" y="13.5" width="5.5" height="4.5" fill="#cce4f7"/><rect x="8.8" y="14.3" width="1.4" height="3.7" fill="#5f5f5f"/><g transform="translate(12 2) scale(.75)"><path d="M0 3.5l4.5-3 6.5 1.2v7l-4.5 3.2-6.5-1.3z" fill="#1f7f32" stroke="#0f4a1a" stroke-width=".7"/><path d="M0 3.5l4.5-3 6.5 1.2-4.5 3z" fill="#38a848"/><path d="M6.5 4.7v7.2" stroke="#0f4a1a" stroke-width=".6"/><path d="M2 6.3c1-.8 2.6-.6 3 .3M1.2 9.5l1.5-1.2M3.5 10.4l1.3-1.4" stroke="#a8f0a8" stroke-width="1.3" fill="none"/></g></svg>
<svg class="a" style="left:108px;top:881px" width="25" height="21" viewBox="0 0 25 21"><rect x="10" y="2" width="6.8" height="4" fill="#5f5f5f"/><path d="M4 7h15.5a1.5 1.5 0 0 1 1.5 1.5V14H4z" fill="#5f5f5f"/><rect x="16.5" y="8.8" width="3" height="1.2" fill="#fff"/><rect x="7.3" y="11.6" width="9.8" height="6.2" fill="#fff" stroke="#5f5f5f" stroke-width="1"/><path d="M9 13.5h6.5M9 15.8h6.5" stroke="#5f5f5f" stroke-width="1.1"/><g transform="translate(8.5 6.4)"><circle r="3.3" fill="#5f5f5f"/><path d="M0-4.6v9.2M-4 -2.3l8 4.6M-4 2.3l8-4.6" stroke="#5f5f5f" stroke-width="1.8"/><circle r="1.5" fill="#cce4f7"/></g></svg>
<svg class="a" style="left:136px;top:881px" width="25" height="21" viewBox="0 0 25 21"><g fill="none" stroke="#606060" stroke-width="1.1"><path d="M5 5.4h9.2M9.6 3.2v2.2M7.2 5.6l5.6 7.6M12.2 6.2l-6.4 8.2M12.4 16.4l3.4-8.6 3.4 8.6M13.5 13.6h4.6"/></g></svg>
<div class="btn" style="left:671px;width:73px">Print</div>
<div class="btn" style="left:754px;width:84px;font-size:11.2px;line-height:20px">Save and Show</div>
<div class="btn" style="left:946px;width:81px">Cancel</div>
<div class="btn" style="left:1037px;width:81px">Apply</div>
<div class="btn" style="left:855px;width:81px;border:2px solid #0078d7;line-height:17px">OK</div>
</body></html>
